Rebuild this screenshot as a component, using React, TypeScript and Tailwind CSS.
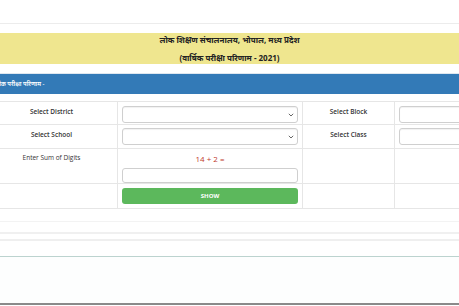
import React from "react";

const Chevron = () => (
    <svg width="6" height="4" viewBox="0 0 6 4" className="shrink-0">
        <path d="M0.8 0.8 L3 3 L5.2 0.8" fill="none" stroke="#555" strokeWidth="0.9" />
    </svg>
);

const SelectBox = () => (
    <div className="h-[17px] w-full rounded-[3px] border border-[#cfcfcf] bg-white flex items-center justify-end pr-[3px] shadow-[inset_0_1px_1px_rgba(0,0,0,0.06)]">
        <Chevron />
    </div>
);

const cell = "border-r border-[#e6e6e6]";

const App: React.FC = () => {
    return (
        <div className="w-[459px] h-[306px] overflow-hidden bg-white relative" style={{ fontFamily: '"Open Sans", "Noto Sans", "Liberation Sans", sans-serif' }}>
            {/* Top strip */}
            <div className="h-[24px] border-b border-[#ececec]" />
            <div className="h-[9px]" />

            {/* Title band */}
            <div className="h-[31px] bg-[#efe68f] flex flex-col items-center text-[8px] font-bold text-[#222] leading-none pt-[3px]">
                <div>लोक शिक्षण संचालनालय, भोपाल, मध्य प्रदेश</div>
                <div className="mt-[10px]">(वार्षिक परीक्षा परिणाम - 2021)</div>
            </div>
            <div className="h-[10px] border-b border-[#dfe7ef]" />

            {/* Blue header */}
            <div className="h-[20px] bg-[#337ab7] flex items-center text-white text-[6px] font-semibold -ml-[5px]">
                लोक परीक्षा परिणाम -
            </div>
            <div className="h-[7px]" />

            {/* Form table */}
            <div className="-ml-[14px] w-[560px] border-t border-[#e6e6e6] text-[6.5px] text-[#333]">
                <div className="grid grid-cols-[132px_185px_92px_151px] h-[23px] border-b border-[#e6e6e6]">
                    <div className={`${cell} flex justify-center pt-[5px] font-semibold`}>Select District</div>
                    <div className={`${cell} px-[4px] pt-[4px]`}><SelectBox /></div>
                    <div className={`${cell} flex justify-center pt-[5px] font-semibold`}>Select Block</div>
                    <div className="px-[4px] pt-[4px]"><SelectBox /></div>
                </div>
                <div className="grid grid-cols-[132px_185px_92px_151px] h-[24px] border-b border-[#e6e6e6]">
                    <div className={`${cell} flex justify-center pt-[5px] font-semibold`}>Select School</div>
                    <div className={`${cell} px-[4px] pt-[3px]`}><SelectBox /></div>
                    <div className={`${cell} flex justify-center pt-[5px] font-semibold`}>Select Class</div>
                    <div className="px-[4px] pt-[3px]"><SelectBox /></div>
                </div>
                <div className="grid grid-cols-[132px_185px_92px_151px] h-[35px] border-b border-[#e6e6e6]">
                    <div className={`${cell} flex justify-center pt-[4px]`}>Enter Sum of Digits</div>
                    <div className={`${cell} px-[4px] pt-[6px] flex flex-col items-center`}>
                        <div className="text-[8px] text-[#c0392b] leading-none">14 + 2 =</div>
                        <div className="mt-[5px] h-[15px] w-full rounded-[3px] border border-[#cfcfcf] bg-white" />
                    </div>
                    <div className={cell} />
                    <div />
                </div>
                <div className="grid grid-cols-[132px_185px_92px_151px] h-[25px] border-b border-[#e6e6e6]">
                    <div className={cell} />
                    <div className={`${cell} px-[4px] pt-[4px]`}>
                        <div className="h-[16px] rounded-[3px] bg-[#5cb85c] text-white text-[6px] font-bold flex items-center justify-center">SHOW</div>
                    </div>
                    <div className={cell} />
                    <div />
                </div>
            </div>

            {/* Faint footer lines */}
            <div className="h-[13px] border-b border-[#f3f3f3]" />
            <div className="h-[12px] border-b-2 border-[#f0f0f0]" />
            <div className="h-[7px] border-b-2 border-[#efefef]" />
            <div className="h-[16px] border-b border-[#bcd3cf]" />
            <div className="h-[46px] bg-[#fdfefe]" />
            <div className="h-[2px] bg-[#8a8a8a]" />
        </div>
    );
};

export default App;
